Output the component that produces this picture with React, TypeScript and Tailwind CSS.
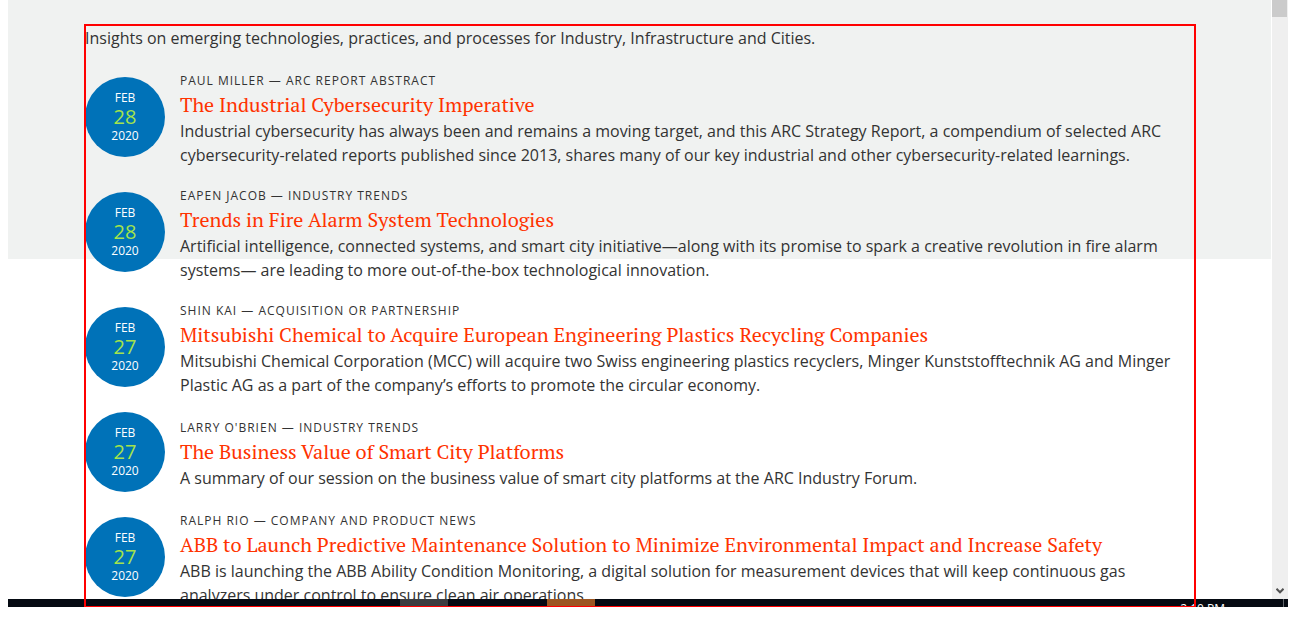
const entries = [
  { month: "FEB", day: "28", year: "2020", author: "Paul Miller", kind: "ARC Report Abstract", title: "The Industrial Cybersecurity Imperative", text: "Industrial cybersecurity has always been and remains a moving target, and this ARC Strategy Report, a compendium of selected ARC cybersecurity-related reports published since 2013, shares many of our key industrial and other cybersecurity-related learnings." },
  { month: "FEB", day: "28", year: "2020", author: "Eapen Jacob", kind: "Industry Trends", title: "Trends in Fire Alarm System Technologies", text: "Artificial intelligence, connected systems, and smart city initiative—along with its promise to spark a creative revolution in fire alarm systems— are leading to more out-of-the-box technological innovation." },
  { month: "FEB", day: "27", year: "2020", author: "Shin Kai", kind: "Acquisition or Partnership", title: "Mitsubishi Chemical to Acquire European Engineering Plastics Recycling Companies", text: "Mitsubishi Chemical Corporation (MCC) will acquire two Swiss engineering plastics recyclers, Minger Kunststofftechnik AG and Minger Plastic AG as a part of the company’s efforts to promote the circular economy." },
  { month: "FEB", day: "27", year: "2020", author: "Larry O'Brien", kind: "Industry Trends", title: "The Business Value of Smart City Platforms", text: "A summary of our session on the business value of smart city platforms at the ARC Industry Forum." },
  { month: "FEB", day: "27", year: "2020", author: "Ralph Rio", kind: "Company and Product News", title: "ABB to Launch Predictive Maintenance Solution to Minimize Environmental Impact and Increase Safety", text: "ABB is launching the ABB Ability Condition Monitoring, a digital solution for measurement devices that will keep continuous gas analyzers under control to ensure clean air operations." },
];

type Entry = (typeof entries)[number];

function DateBadge({ entry }: { entry: Entry }) {
  return (
    <time className="flex size-20 shrink-0 flex-col items-center justify-center rounded-full bg-[#0072b8] text-xs text-white">
      <span className="leading-[18px]">{entry.month}</span>
      <span className="text-xl leading-5 text-[#a4e34b]">{entry.day}</span>
      <span className="leading-[18px]">{entry.year}</span>
    </time>
  );
}

function Insight({ entry }: { entry: Entry }) {
  return (
    <li className="flex items-center gap-[15px]">
      <DateBadge entry={entry} />
      <div className="min-w-0 flex-1">
        <p className="pt-0.5 text-xs leading-6 tracking-[1px] uppercase">
          {entry.author} — {entry.kind}
        </p>
        <h2 className="pb-0.5 font-['PT_Serif','Liberation_Serif',serif] text-xl leading-6 text-[#ff3300]">
          <a href="#">{entry.title}</a>
        </h2>
        <p>{entry.text}</p>
      </div>
    </li>
  );
}

function ScrollBar() {
  return (
    <div className="flex w-4 shrink-0 flex-col justify-between bg-[#efefef]">
      <div className="mr-px h-[17px] bg-[#cbcbcb]" />
      <button aria-label="Scroll down" className="flex h-4 items-center justify-center pr-px text-[#505050]">
        <svg width="8" height="6" viewBox="0 0 8 6" fill="none" stroke="currentColor" strokeWidth="2">
          <path d="M0.5 0.8 4 4.3 7.5 0.8" />
        </svg>
      </button>
    </div>
  );
}

function TaskBar() {
  return (
    <footer className="flex h-2 shrink-0 overflow-hidden bg-[#050a12] text-xs leading-4 text-white">
      <div className="ml-[392px] w-12 shrink-0 bg-[#3b3d40]" />
      <div className="ml-[99px] w-12 shrink-0 bg-[#9b5622]" />
      <div className="mr-[58px] ml-auto pt-0.5 whitespace-nowrap">2:10 PM</div>
      <div className="mr-1 w-px shrink-0 bg-[#62666b]" />
    </footer>
  );
}

export default function App() {
  return (
    <div className="h-screen overflow-hidden bg-white pr-[7px] pb-[25px] pl-2 font-['Open_Sans',sans-serif] text-base leading-6 text-[#333333]">
      <div className="relative flex h-full flex-col">
        <div className="flex min-h-0 flex-1">
          <main className="relative min-w-0 flex-1 overflow-hidden">
            <div className="absolute top-0 right-px left-0 h-[259px] bg-[#f0f2f1]" />
            <div className="relative mr-[76px] ml-[77px] pt-[26px] pr-5">
              <p>Insights on emerging technologies, practices, and processes for Industry, Infrastructure and Cities.</p>
              <ul className="mt-[17px] flex flex-col gap-[15px]">
                {entries.map((entry) => (
                  <Insight key={entry.title} entry={entry} />
                ))}
              </ul>
            </div>
          </main>
          <ScrollBar />
        </div>
        <TaskBar />
        <div className="pointer-events-none absolute top-6 right-[92px] bottom-0 left-[76px] border-2 border-b border-[#ff0000]" />
      </div>
    </div>
  );
}
